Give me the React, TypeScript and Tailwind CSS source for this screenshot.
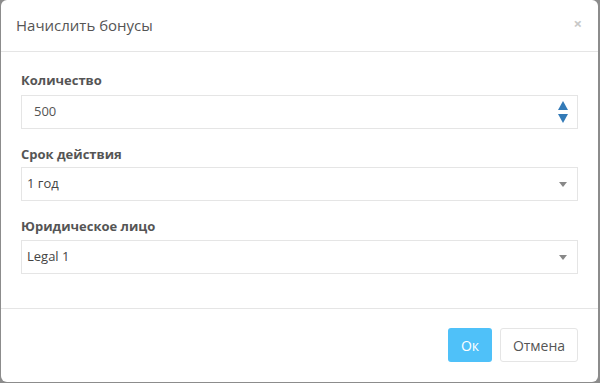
export default function App() {
  const font = { fontFamily: '"Open Sans", "Noto Sans", sans-serif' };
  return (
    <div className="w-[600px] h-[383px] bg-[#8c8c8c] pl-[1px]" style={font}>
      <div className="w-[597px] h-[382px] bg-white rounded-[6px] flex flex-col text-[#555]">
        {/* header */}
        <div className="h-[52px] border-b border-[#e5e5e5] flex items-center justify-between pl-[15px] pr-[16px]">
          <h4 className="text-[15px] text-[#555] leading-none">Начислить бонусы</h4>
          <span className="text-[#c8c8c8] text-[15px] font-bold leading-none pb-[4px]">×</span>
        </div>

        {/* body */}
        <div className="flex-1 px-[20px] pt-[19px] border-b border-[#e5e5e5]">
          <div className="mb-[16px]">
            <label className="block text-[13px] font-bold leading-[18px] mb-[6px]">Количество</label>
            <div className="h-[34px] border border-[#e5e5e5] flex items-center justify-between pl-[12px] pr-[9px]">
              <span className="text-[13px]">500</span>
              <div className="flex flex-col gap-[4px]">
                <svg width="10" height="9" viewBox="0 0 10 9">
                  <polygon points="5,0 10,9 0,9" fill="#337ab7" />
                </svg>
                <svg width="10" height="9" viewBox="0 0 10 9">
                  <polygon points="0,0 10,0 5,9" fill="#337ab7" />
                </svg>
              </div>
            </div>
          </div>

          <div className="mb-[16px]">
            <label className="block text-[13px] font-bold leading-[18px] mb-[4px]">Срок действия</label>
            <div className="h-[34px] border border-[#e5e5e5] flex items-center justify-between pl-[5px] pr-[10px]">
              <span className="text-[13px] text-[#444]">1 год</span>
              <svg width="8" height="5" viewBox="0 0 8 5">
                <polygon points="0,0 8,0 4,5" fill="#888" />
              </svg>
            </div>
          </div>

          <div>
            <label className="block text-[13px] font-bold leading-[18px] mb-[5px]">Юридическое лицо</label>
            <div className="h-[34px] border border-[#e5e5e5] flex items-center justify-between pl-[5px] pr-[10px]">
              <span className="text-[13px] text-[#444]">Legal 1</span>
              <svg width="8" height="5" viewBox="0 0 8 5">
                <polygon points="0,0 8,0 4,5" fill="#888" />
              </svg>
            </div>
          </div>
        </div>

        {/* footer */}
        <div className="h-[73px] flex items-start justify-end gap-[8px] pt-[19px] pr-[20px]">
          <button className="h-[34px] w-[44px] rounded-[3px] bg-[#4fc1f9] text-white text-[14px]">Ок</button>
          <button className="h-[34px] w-[78px] rounded-[3px] bg-white border border-[#e5e5e5] text-[#555] text-[14px]">Отмена</button>
        </div>
      </div>
    </div>
  );
}
